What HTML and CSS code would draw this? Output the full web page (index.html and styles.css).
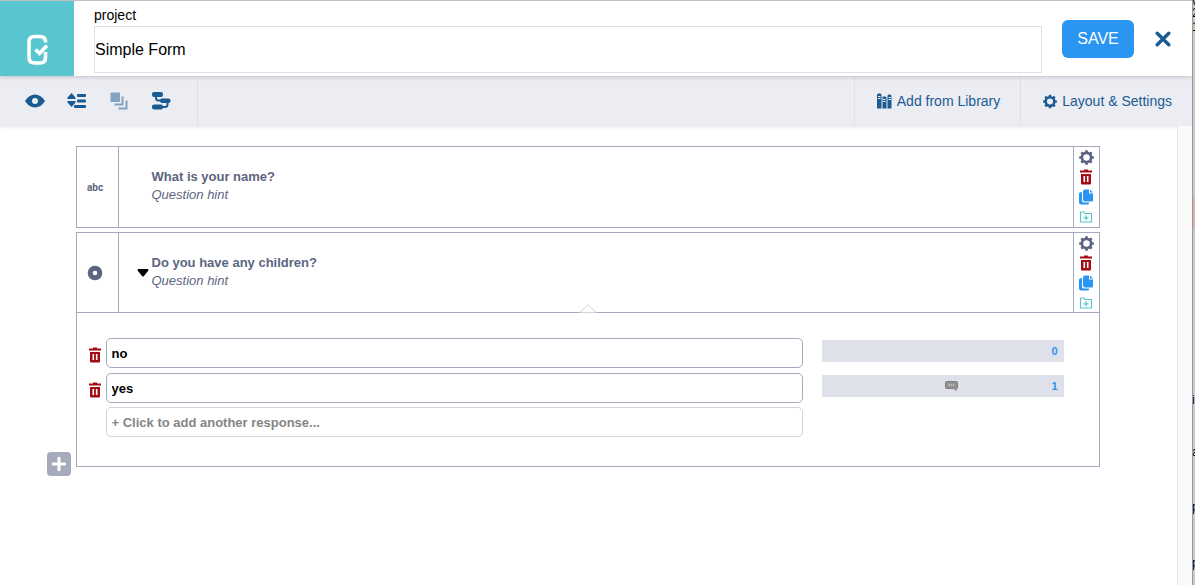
FILE: index.html
```html
<!DOCTYPE html>
<html lang="en">
<head>
    <meta charset="UTF-8">
    <meta name="viewport" content="width=device-width, initial-scale=1.0">
    <title>Simple Form</title>
    <link rel="stylesheet" href="styles.css">
</head>
<body>
    <!-- shared icons -->
    <svg class="icon-defs" aria-hidden="true">
        <symbol id="icon-gear" viewBox="0 0 16 16">
            <circle cx="8" cy="8" r="4.900" fill="none" stroke="currentColor" stroke-width="2.800"/>
            <path d="M8 .2v3M8 12.800v3M.2 8h3M12.800 8h3M2.500 2.500l2 2M11.500 11.500l2 2M13.500 2.500l-2 2M4.500 11.500l-2 2" stroke="currentColor" stroke-width="2.800"/>
        </symbol>
        <symbol id="icon-trash" viewBox="0 0 12 16">
            <path fill="currentColor" fill-rule="evenodd" d="M4 .5h4v1h4v2H0v-2h4zM1 5h10v9.500q0 1-1 1H2q-1 0-1-1zM3.500 7v6h1.600V7zM6.900 7v6h1.600V7z"/>
        </symbol>
        <symbol id="icon-copy" viewBox="0 0 14 16">
            <path fill="currentColor" d="M6 .5h4v4h4v7q0 1-1 1H6q-2 0-2-2v-8q0-2 2-2zM11 .5L14 3.500h-3z"/>
            <path fill="currentColor" d="M3 3v8.500q0 2 2 2h5v1q0 1-1 1H2q-2 0-2-2V5q0-2 3-2z"/>
        </symbol>
        <symbol id="icon-folder" viewBox="0 0 14 12">
            <path fill="none" stroke="currentColor" stroke-width="1.200" stroke-linejoin="round" d="M1.500 1h3.500l1 1.500h6.500v8.500h-11zM7 4.300v5M4.500 6.800h5"/>
        </symbol>
    </svg>

    <div class="page">
        <main class="builder">
            <header class="form-header">
                <a class="logo" href="#" aria-label="Home">
                    <svg width="22" height="32" viewBox="0 0 22 32" fill="none" stroke="#fff" stroke-width="3.600">
                        <path d="M19.500 8.500V8q0-5.500-5.500-5.500H8.500Q3 2.500 3 8v15.500Q3 29 8.500 29H14q5.500 0 5.500-5.500V18"/>
                        <path d="M9.500 15.500l4 4 7.500-8" stroke-width="3.600"/>
                    </svg>
                </a>
                <div class="form-name">
                    <label for="formName">project</label>
                    <input type="text" id="formName" value="Simple Form">
                </div>
                <button class="save-button">SAVE</button>
                <button class="close-button" aria-label="Close">
                    <svg width="16" height="16" viewBox="0 0 16 16" stroke="currentColor" stroke-width="3.400" stroke-linecap="round"><path d="M2.200 2.200l11.600 11.600M13.800 2.200L2.200 13.800"/></svg>
                </button>
            </header>

            <div class="toolbar">
                <div class="tools">
                    <button aria-label="Preview form">
                        <svg width="20" height="14" viewBox="0 0 20 14"><path fill="currentColor" fill-rule="evenodd" d="M0 7Q4 .5 10 .5T20 7q-4 6.500-10 6.500T0 7zM10 4a3 3 0 1 0 0 6a3 3 0 1 0 0-6z"/></svg>
                    </button>
                    <button aria-label="Expand and collapse questions">
                        <svg width="20" height="16" viewBox="0 0 20 16" fill="currentColor"><path d="M4.500 0L8.500 4.500V6H.5V4.500zM.5 8h8v1.500l-4 4.500-4-4.500z"/><rect x="10" y="1" width="9" height="3" rx="1"/><rect x="10" y="6.500" width="9" height="3" rx="1"/><rect x="7" y="12" width="12" height="3" rx="1"/></svg>
                    </button>
                    <button aria-label="Group questions" disabled>
                        <svg width="18" height="18" viewBox="0 0 18 18" fill="currentColor"><rect x=".5" y=".5" width="9.500" height="9.500" rx="1"/><path d="M11.500 4.500H13.500v9H4.500v-2h7zM15.500 8.500h2V17.500H8.500v-2h7z"/></svg>
                    </button>
                    <button aria-label="Insert cascading select">
                        <svg width="20" height="18" viewBox="0 0 20 18"><g fill="currentColor"><rect x="1" y="0" width="11" height="5" rx="2"/><rect x="9" y="6.500" width="10.500" height="4.500" rx="2"/><rect x="1" y="12.500" width="11" height="5" rx="2"/></g><path fill="none" stroke="currentColor" stroke-width="2" d="M5 4v2q0 2.500 2.500 2.500H10M16.500 10v2.500q0 2.500-2.500 2.500H11"/></svg>
                    </button>
                </div>
                <button class="toolbar-link">
                    <svg width="15" height="16" viewBox="0 0 15 16"><path fill="currentColor" d="M1.500.5H3Q4.500.5 4.500 2v13.500H0V2Q0 .5 1.500.5zM5.500 3.500H8q1.500 0 1.500 1.500v10.500h-4zM10.500 3Q10.500 1.500 12 1.500h1q1.500 0 1.500 1.500v12.500h-4z"/><path stroke="#ecedf2" d="M1 3.500h2.500M1 5.500h2.500M6 6.500h2.500M6 8.500h2.500M11.500 4.500H14M11.500 6.500H14"/></svg>
                    Add from Library
                </button>
                <button class="toolbar-link">
                    <svg width="14" height="15"><use href="#icon-gear"/></svg>
                    Layout &amp; Settings
                </button>
            </div>

            <div class="workspace">
                <div class="canvas">
                    <div class="questions">
                        <section class="question">
                            <div class="question-row">
                                <div class="question-type">abc</div>
                                <div class="question-text">
                                    <h2>What is your name?</h2>
                                    <p>Question hint</p>
                                </div>
                                <div class="question-actions">
                                    <button class="settings" aria-label="Settings"><svg width="15" height="15"><use href="#icon-gear"/></svg></button>
                                    <button class="delete" aria-label="Delete question"><svg width="12" height="16"><use href="#icon-trash"/></svg></button>
                                    <button class="duplicate" aria-label="Duplicate question"><svg width="14" height="16"><use href="#icon-copy"/></svg></button>
                                    <button class="library" aria-label="Add question to library"><svg width="14" height="12"><use href="#icon-folder"/></svg></button>
                                </div>
                            </div>
                        </section>

                        <section class="question">
                            <div class="question-row">
                                <div class="question-type">
                                    <svg width="16" height="16" viewBox="0 0 16 16"><circle cx="8" cy="8" r="4.800" fill="none" stroke="currentColor" stroke-width="5"/></svg>
                                </div>
                                <div class="question-text">
                                    <button class="toggle" aria-label="Hide responses"><svg width="12" height="8" viewBox="0 0 12 8"><path d="M1 0h10q1 1 0 2L7 7q-1 1-2 0L1 2Q0 1 1 0z"/></svg></button>
                                    <h2>Do you have any children?</h2>
                                    <p>Question hint</p>
                                </div>
                                <div class="question-actions">
                                    <button class="settings" aria-label="Settings"><svg width="15" height="15"><use href="#icon-gear"/></svg></button>
                                    <button class="delete" aria-label="Delete question"><svg width="12" height="16"><use href="#icon-trash"/></svg></button>
                                    <button class="duplicate" aria-label="Duplicate question"><svg width="14" height="16"><use href="#icon-copy"/></svg></button>
                                    <button class="library" aria-label="Add question to library"><svg width="14" height="12"><use href="#icon-folder"/></svg></button>
                                </div>
                            </div>
                            <div class="responses">
                                <svg class="notch" width="16" height="9" viewBox="0 0 16 9"><path fill="#fff" stroke="#cfcfdf" d="M0 8.500L8 .7l8 7.800"/></svg>
                                <div class="response">
                                    <button class="delete" aria-label="Delete response"><svg width="12" height="16"><use href="#icon-trash"/></svg></button>
                                    <input type="text" value="no" aria-label="Response label">
                                    <div class="response-value">0</div>
                                </div>
                                <div class="response">
                                    <button class="delete" aria-label="Delete response"><svg width="12" height="16"><use href="#icon-trash"/></svg></button>
                                    <input type="text" value="yes" aria-label="Response label">
                                    <div class="response-value">
                                        <svg class="comment" width="13" height="10" viewBox="0 0 13 10"><path fill="#929292" stroke="#7d7d7d" d="M1.500.5h10q1 0 1 1v5q0 1-1 1H11v2l-2-2H1.500q-1 0-1-1v-5q0-1 1-1z"/><path stroke="#e4e4e4" stroke-dasharray="1.500 .7" d="M3.500 4h6.500"/></svg>
                                        1
                                    </div>
                                </div>
                                <button class="add-response">+ Click to add another response...</button>
                            </div>
                        </section>
                        <button class="add-question" aria-label="Add question">
                            <svg width="16" height="16" viewBox="0 0 16 16" stroke="#fff" stroke-width="3"><path d="M8 1v14M1 8h14"/></svg>
                        </button>
                    </div>
                </div>
                <div class="scroll-track"></div>
            </div>
        </main>

        <!-- sliver of the page underneath the builder -->
        <aside class="backdrop">
            <span class="b-v">v</span>
            <span class="b-2">2</span>
            <span class="b-1">1</span>
            <span class="b-alert"></span>
            <span class="b-i">i</span>
            <span class="b-a">a</span>
            <span class="b-p">p</span>
            <span class="b-q">p</span>
        </aside>
    </div>
</body>
</html>
```
FILE: styles.css
```css
:root {
    --blue: #1b5b93;
    --bright-blue: #2b96f1;
    --teal: #59c5ce;
    --red: #a30a12;
    --slate: #5c6580;
    --line: #a5aabd;
    --light-line: #dfe0ea;
    --toolbar: #ecedf2;
}

* {
    margin: 0;
    padding: 0;
    box-sizing: border-box;
}

body {
    font-family: "Liberation Sans", Arial, sans-serif;
    font-size: 13px;
    color: #000;
    background: #fff;
}

button,
input {
    font: inherit;
}

button {
    border: none;
    background: none;
    cursor: pointer;
}

svg {
    display: block;
    flex: none;
}

.icon-defs {
    display: none;
}

.page {
    display: flex;
    min-height: 100vh;
}

.builder {
    flex: 1;
    min-width: 0;
    display: flex;
    flex-direction: column;
    border-top: 1px solid #c8c8c8;
}

/* header */
.form-header {
    position: relative;
    display: flex;
    height: 75px;
    background: #fff;
    box-shadow: 0 1px 4px rgba(60, 65, 90, 0.25);
}

.logo {
    width: 74px;
    padding: 33px 26px 0;
    background: var(--teal);
}

.form-name {
    flex: 1;
    padding: 5px 20px 0;
}

.form-name label {
    display: block;
    height: 20px;
    font-size: 14px;
    line-height: 18px;
}

.form-name input {
    display: block;
    width: 100%;
    height: 47px;
    border: 1px solid var(--light-line);
    font-size: 16px;
}

.save-button {
    width: 72px;
    height: 38px;
    margin-top: 19px;
    border-radius: 6px;
    background: var(--bright-blue);
    color: #fff;
    font-size: 16px;
}

.close-button {
    height: 38px;
    margin: 19px 21px 0;
    color: var(--blue);
}

/* toolbar */
.toolbar {
    display: flex;
    height: 50px;
    background: var(--toolbar);
    color: var(--blue);
    box-shadow: 0 1px 3px rgba(60, 65, 90, 0.15);
}

.tools {
    display: flex;
    align-items: center;
    padding: 0 15px 0 14px;
    margin-right: auto;
    border-right: 1px solid var(--light-line);
}

.tools button {
    display: flex;
    justify-content: center;
    width: 42px;
    color: var(--blue);
}

.tools button:disabled {
    opacity: 0.5;
}

.toolbar-link {
    display: flex;
    align-items: center;
    gap: 5px;
    padding: 0 20px 0 22px;
    border-left: 1px solid var(--light-line);
    color: var(--blue);
    font-size: 14px;
}

/* question list */
.workspace {
    flex: 1;
    display: flex;
}

.canvas {
    flex: 1;
    padding: 20px 42px 20px 40px;
}

.questions {
    max-width: 1024px;
    margin: 0 auto;
}

.question {
    margin-bottom: 4px;
    border: 1px solid var(--line);
    color: var(--slate);
}

.question-row {
    display: flex;
}

.question-type {
    display: flex;
    align-items: center;
    justify-content: center;
    width: 42px;
    padding-right: 4px;
    border-right: 1px solid var(--line);
    font-family: Roboto, sans-serif;
    font-size: 10px;
    font-weight: 700;
}

.question-text {
    position: relative;
    flex: 1;
    padding: 21px 33px 0;
    line-height: 18px;
}

.question-text h2 {
    font-size: 13px;
}

.question-text p {
    font-style: italic;
}

.toggle {
    position: absolute;
    left: 18px;
    top: 36px;
}

.question-actions {
    width: 26px;
    border-left: 1px solid var(--line);
}

.question-actions button {
    display: flex;
    align-items: center;
    justify-content: center;
    width: 100%;
    height: 20px;
}

.settings {
    color: var(--slate);
}

.delete {
    color: var(--red);
}

.duplicate {
    color: var(--bright-blue);
}

.library {
    color: var(--teal);
}

/* responses */
.responses {
    position: relative;
    margin-top: -1px;
    padding: 25px 35px 29px 12px;
    border-top: 1px solid var(--line);
}

.notch {
    position: absolute;
    left: 50%;
    top: -9px;
    margin-left: -8px;
}

.response {
    display: flex;
    align-items: center;
}

.response + .response {
    margin-top: 5px;
}

.response .delete {
    width: 17px;
    padding-top: 4px;
}

.response input,
.add-response {
    flex: 1;
    min-width: 0;
    height: 30px;
    padding: 0 5px;
    border: 1px solid var(--line);
    border-radius: 5px;
    font-weight: 700;
}

.response-value {
    position: relative;
    width: 242px;
    height: 22px;
    margin: 0 0 4px 19px;
    padding-right: 6px;
    background: #dfe1ea;
    color: var(--bright-blue);
    font-size: 11px;
    font-weight: 700;
    line-height: 22px;
    text-align: right;
}

.comment {
    position: absolute;
    left: 123px;
    top: 6px;
}

.add-response {
    display: block;
    width: calc(100% - 278px);
    margin: 4px 0 0 17px;
    border-color: #d2d2e0;
    color: #858585;
    text-align: left;
}

.add-question {
    display: flex;
    align-items: center;
    justify-content: center;
    width: 24px;
    height: 24px;
    margin: -19px 0 0 -29px;
    border-radius: 4px;
    background: var(--line);
}

.scroll-track {
    width: 15px;
    border-left: 1px solid #e8e8e8;
    background: #fafafa;
}

/* page underneath */
.backdrop {
    position: relative;
    width: 3px;
    overflow: hidden;
    border-left: 1px solid #999;
    background: #c9c9c9;
    font-size: 12px;
    line-height: 14px;
}

.backdrop span {
    position: absolute;
    left: -1px;
}

.backdrop .b-v { top: -6px; }
.backdrop .b-2 { top: 6px; }
.backdrop .b-1 { top: 20px; }
.backdrop .b-i { top: 393px; }
.backdrop .b-a { top: 445px; }
.backdrop .b-p { top: 500px; }
.backdrop .b-q { top: 556px; }

.backdrop .b-alert {
    top: 198px;
    width: 4px;
    height: 30px;
    background: #d9b3a8;
}
```
